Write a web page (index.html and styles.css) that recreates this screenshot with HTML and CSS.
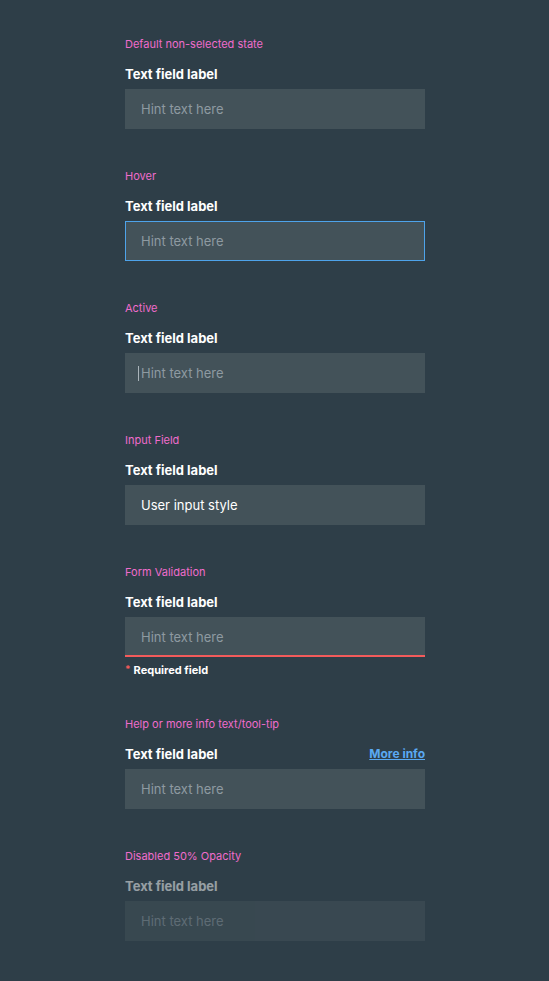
FILE: index.html
```html
<!DOCTYPE html>
<html lang="en">
<head>
<meta charset="utf-8">
<title>Text field states</title>
<link rel="stylesheet" href="styles.css">
</head>
<body>
<main class="page">
  <section class="state">
    <p class="caption">Default non-selected state</p>
    <div class="label-row"><span class="label">Text field label</span></div>
    <div class="field"><span class="hint">Hint text here</span></div>
  </section>

  <section class="state">
    <p class="caption">Hover</p>
    <div class="label-row"><span class="label">Text field label</span></div>
    <div class="field field--hover"><span class="hint">Hint text here</span></div>
  </section>

  <section class="state">
    <p class="caption">Active</p>
    <div class="label-row"><span class="label">Text field label</span></div>
    <div class="field field--active"><span class="caret"></span><span class="hint">Hint text here</span></div>
  </section>

  <section class="state">
    <p class="caption">Input Field</p>
    <div class="label-row"><span class="label">Text field label</span></div>
    <div class="field"><span class="value">User input style</span></div>
  </section>

  <section class="state">
    <p class="caption">Form Validation</p>
    <div class="label-row"><span class="label">Text field label</span></div>
    <div class="field field--error"><span class="hint">Hint text here</span></div>
    <p class="error"><span class="star">*</span> Required field</p>
  </section>

  <section class="state">
    <p class="caption">Help or more info text/tool-tip</p>
    <div class="label-row"><span class="label">Text field label</span><a class="more" href="#">More info</a></div>
    <div class="field"><span class="hint">Hint text here</span></div>
  </section>

  <section class="state state--disabled">
    <p class="caption">Disabled 50% Opacity</p>
    <div class="dim">
      <div class="label-row"><span class="label">Text field label</span></div>
      <div class="field"><span class="hint">Hint text here</span></div>
    </div>
  </section>
</main>
</body>
</html>
```

FILE: styles.css
```css
html, body {
  margin: 0;
  padding: 0;
  background: #2e3e48;
}
body {
  font-family: Inter, "Liberation Sans", Arial, sans-serif;
  color: #ffffff;
  min-height: 981px;
}
.page {
  width: 300px;
  margin: 0 0 0 125px;
  padding-top: 36px;
  display: flex;
  flex-direction: column;
  gap: 39px;
}
.state {
  display: flex;
  flex-direction: column;
}
.caption {
  margin: 0 0 13px 0;
  font-size: 11px;
  line-height: 16px;
  color: #f06ccc;
}
.label-row {
  display: flex;
  justify-content: space-between;
  align-items: center;
  height: 18px;
  margin-bottom: 6px;
}
.label {
  font-size: 13px;
  font-weight: 700;
  line-height: 18px;
  color: #ffffff;
}
.more {
  font-size: 12px;
  font-weight: 700;
  color: #5aa9f2;
  text-decoration: underline;
  line-height: 18px;
}
.field {
  box-sizing: border-box;
  height: 40px;
  background: #435259;
  display: flex;
  align-items: center;
  padding-left: 16px;
}
.field--hover {
  border: 1px solid #4ea3ea;
  padding-left: 15px;
}
.field--active {
  padding-left: 13px;
}
.field--error {
  border-bottom: 2px solid #f45b5b;
  padding-top: 2px;
}
.caret {
  width: 1px;
  height: 15px;
  background: #aab4ba;
  margin-right: 2px;
}
.hint {
  font-size: 13px;
  color: #8e9aa1;
}
.value {
  font-size: 13px;
  color: #ffffff;
}
.error {
  margin: 6px 0 0 0;
  font-size: 11px;
  font-weight: 700;
  line-height: 14px;
  color: #ffffff;
  display: flex;
  align-items: flex-start;
  gap: 3px;
}
.star {
  color: #f45b5b;
  font-size: 10px;
  line-height: 12px;
}
.dim {
  opacity: 0.5;
}
```
